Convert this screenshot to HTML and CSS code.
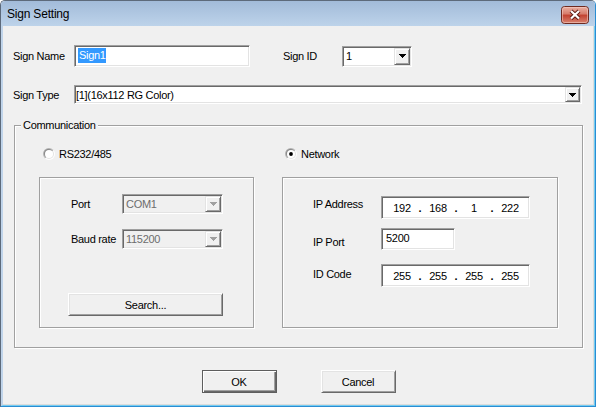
FILE: index.html
```html
<!DOCTYPE html>
<html>
<head>
<meta charset="utf-8">
<title>Sign Setting</title>
<link rel="stylesheet" href="styles.css">
</head>
<body>
<div class="window">
  <div class="titlebar">
    <span class="title">Sign Setting</span>
    <div class="close">
      <svg width="28" height="18" viewBox="0 0 28 18">
        <defs>
          <linearGradient id="cg" x1="0" y1="0" x2="0" y2="1">
            <stop offset="0" stop-color="#ebb3a5"/>
            <stop offset="0.45" stop-color="#d67a69"/>
            <stop offset="0.5" stop-color="#c2412f"/>
            <stop offset="1" stop-color="#d98673"/>
          </linearGradient>
        </defs>
        <rect x="0.5" y="0.5" width="27" height="17" rx="3" fill="url(#cg)" stroke="#6e2a20"/>
        <rect x="1.5" y="1.5" width="25" height="15" rx="2" fill="none" stroke="#f6d2c8" stroke-opacity="0.55"/>
        <path d="M10 5 L18 12.5 M18 5 L10 12.5" stroke="#5a1c14" stroke-width="4"/>
        <path d="M10 5 L18 12.5 M18 5 L10 12.5" stroke="#ffffff" stroke-width="2.2"/>
      </svg>
    </div>
  </div>
  <div class="client">
    <div class="main">
      <div class="row row-name">
        <span class="lbl">Sign Name</span>
        <div class="edit name-edit"><span class="sel">Sign1</span></div>
        <span class="lbl lbl-id">Sign ID</span>
        <div class="combo id-combo">
          <span class="ctext">1</span>
          <span class="cbtn"><svg width="7" height="4" viewBox="0 0 7 4"><path d="M0 0h7v1h-1v1h-1v1h-1v1h-1v-1h-1v-1h-1v-1h-1z" fill="#000"/></svg></span>
        </div>
      </div>
      <div class="row row-type">
        <span class="lbl">Sign Type</span>
        <div class="combo type-combo">
          <span class="ctext">[1](16x112 RG Color)</span>
          <span class="cbtn"><svg width="7" height="4" viewBox="0 0 7 4"><path d="M0 0h7v1h-1v1h-1v1h-1v1h-1v-1h-1v-1h-1v-1h-1z" fill="#000"/></svg></span>
        </div>
      </div>
      <div class="group etched">
        <span class="legend">Communication</span>
        <div class="col col-left">
          <div class="radio-row">
            <svg width="12" height="12" viewBox="0 0 12 12">
              <defs>
                <linearGradient id="ro1" x1="0" y1="0" x2="1" y2="1"><stop offset="0" stop-color="#9a9a9a"/><stop offset="0.5" stop-color="#c8c8c8"/><stop offset="0.55" stop-color="#ffffff"/><stop offset="1" stop-color="#ffffff"/></linearGradient>
                <linearGradient id="ri1" x1="0" y1="0" x2="1" y2="1"><stop offset="0" stop-color="#6a6a6a"/><stop offset="0.5" stop-color="#a8a8a8"/><stop offset="0.55" stop-color="#e3e3e3"/><stop offset="1" stop-color="#e3e3e3"/></linearGradient>
              </defs>
              <circle cx="6" cy="6" r="6" fill="url(#ro1)"/>
              <circle cx="6" cy="6" r="5" fill="url(#ri1)"/>
              <circle cx="6" cy="6" r="4" fill="#fff"/>
            </svg>
            <span>RS232/485</span>
          </div>
          <div class="box etched serial-box">
            <div class="frow">
              <span class="lbl2">Port</span>
              <div class="combo dis small-combo">
                <span class="ctext">COM1</span>
                <span class="cbtn"><svg width="7" height="4" viewBox="0 0 7 4"><path d="M0 0h7v1h-1v1h-1v1h-1v1h-1v-1h-1v-1h-1v-1h-1z" fill="#a0a0a0"/></svg></span>
              </div>
            </div>
            <div class="frow baud-row">
              <span class="lbl2">Baud rate</span>
              <div class="combo dis small-combo">
                <span class="ctext">115200</span>
                <span class="cbtn"><svg width="7" height="4" viewBox="0 0 7 4"><path d="M0 0h7v1h-1v1h-1v1h-1v1h-1v-1h-1v-1h-1v-1h-1z" fill="#a0a0a0"/></svg></span>
              </div>
            </div>
            <div class="btn search-btn">Search...</div>
          </div>
        </div>
        <div class="col col-right">
          <div class="radio-row">
            <svg width="12" height="12" viewBox="0 0 12 12">
              <defs>
                <linearGradient id="ro2" x1="0" y1="0" x2="1" y2="1"><stop offset="0" stop-color="#9a9a9a"/><stop offset="0.5" stop-color="#c8c8c8"/><stop offset="0.55" stop-color="#ffffff"/><stop offset="1" stop-color="#ffffff"/></linearGradient>
                <linearGradient id="ri2" x1="0" y1="0" x2="1" y2="1"><stop offset="0" stop-color="#6a6a6a"/><stop offset="0.5" stop-color="#a8a8a8"/><stop offset="0.55" stop-color="#e3e3e3"/><stop offset="1" stop-color="#e3e3e3"/></linearGradient>
              </defs>
              <circle cx="6" cy="6" r="6" fill="url(#ro2)"/>
              <circle cx="6" cy="6" r="5" fill="url(#ri2)"/>
              <circle cx="6" cy="6" r="4" fill="#fff"/>
              <circle cx="6" cy="6" r="1.9" fill="#000"/>
            </svg>
            <span>Network</span>
          </div>
          <div class="box etched net-box">
            <div class="nrow">
              <span class="lbl3 l-ip">IP Address</span>
              <div class="edit ipbox">
                <span class="oct">192</span><span class="dot">.</span><span class="oct">168</span><span class="dot">.</span><span class="oct">1</span><span class="dot">.</span><span class="oct">222</span>
              </div>
            </div>
            <div class="nrow port-row">
              <span class="lbl3 l-port">IP Port</span>
              <div class="edit portbox">5200</div>
            </div>
            <div class="nrow id-row">
              <span class="lbl3 l-code">ID Code</span>
              <div class="edit ipbox">
                <span class="oct">255</span><span class="dot">.</span><span class="oct">255</span><span class="dot">.</span><span class="oct">255</span><span class="dot">.</span><span class="oct">255</span>
              </div>
            </div>
          </div>
        </div>
      </div>
    </div>
    <div class="buttons">
      <div class="btn default-btn">OK</div>
      <div class="btn">Cancel</div>
    </div>
  </div>
</div>
</body>
</html>
```
FILE: styles.css
```css
* { box-sizing: border-box; }
html, body { margin: 0; padding: 0; }
body {
  width: 596px;
  height: 407px;
  overflow: hidden;
  background: #ffffff;
  font-family: "Liberation Sans", Arial, sans-serif;
  font-size: 11px;
  line-height: 14px;
  letter-spacing: -0.3px;
  color: #000;
}
.window {
  width: 596px;
  height: 407px;
  display: flex;
  flex-direction: column;
  border: 1px solid;
  border-color: #5d6a7b #2a8dd2 #2a8dd2 #5d6a7b;
  border-radius: 5px 5px 0 0;
  overflow: hidden;
}
.titlebar {
  height: 25px;
  flex: none;
  display: flex;
  align-items: center;
  justify-content: space-between;
  padding: 0 6px 0 6px;
  background: linear-gradient(#a2bbd9, #bdd3ea);
}
.title {
  font-size: 12px;
  letter-spacing: -0.2px;
  padding-top: 1px;
}
.close { width: 28px; height: 18px; display: flex; margin-top: 2px; }
.client {
  flex: 1;
  background: #f0f0f0;
  border-left: 2px solid #c0d4ea;
  border-right: 1px solid #74ccf1;
  border-bottom: 1px solid #74ccf1;
  box-shadow: inset -1px -1px 0 #dcdcdc;
  padding-top: 19px;
}
.main { padding-left: 10px; }
.row { display: flex; align-items: center; }
.lbl { width: 61px; flex: none; white-space: nowrap; }
.lbl-id { margin-left: 33px; width: 59px; }

.edit {
  background: #fff;
  border: 1px solid;
  border-color: #a0a0a0 #fff #fff #a0a0a0;
  box-shadow: inset 1px 1px 0 #696969, inset -1px -1px 0 #e3e3e3;
}
.name-edit {
  width: 176px;
  height: 22px;
  display: flex;
  align-items: flex-start;
  padding: 1px 0 0 3px;
}
.name-edit .sel {
  margin-top: 1px;
  background: #3399ff;
  color: #fff;
  line-height: 15px;
  padding: 0 0 0 1px;
}

.combo {
  display: flex;
  align-items: stretch;
  background: #fff;
  border: 1px solid;
  border-color: #a0a0a0 #fff #fff #a0a0a0;
  box-shadow: inset 1px 1px 0 #696969, inset -1px -1px 0 #e3e3e3;
  padding: 1px;
}
.ctext { flex: 1; display: flex; align-items: center; padding-left: 2px; white-space: nowrap; }
.cbtn {
  width: 16px;
  flex: none;
  display: flex;
  align-items: center;
  justify-content: center;
  background: #f0f0f0;
  border: 1px solid;
  border-color: #e3e3e3 #696969 #696969 #e3e3e3;
  box-shadow: inset 1px 1px 0 #fff, inset -1px -1px 0 #a0a0a0;
}
.id-combo { width: 70px; height: 21px; }
.id-combo .ctext { padding-left: 2px; }
.row-type { margin-top: 18px; }
.type-combo { width: 508px; height: 19px; }
.type-combo .ctext { padding-left: 0; }
.type-combo .cbtn { width: 15px; }

.etched {
  border: 1px solid #a0a0a0;
  box-shadow: inset 1px 1px 0 #fff, 1px 1px 0 #fff;
}
.group {
  position: relative;
  margin: 21px 0 0 1px;
  width: 569px;
  height: 223px;
  padding: 21px 0 0 24px;
  display: flex;
  gap: 28px;
}
.legend {
  position: absolute;
  top: -8px;
  left: 6px;
  padding: 0 2px;
  background: #f0f0f0;
  line-height: 14px;
}
.col { display: flex; flex-direction: column; }
.col-left { width: 215px; }
.col-right { width: 276px; }
.radio-row {
  display: flex;
  align-items: center;
  height: 14px;
  padding-left: 4px;
  gap: 4px;
}
.col-right .radio-row { padding-left: 3px; }
.box { margin-top: 16px; height: 151px; }

.serial-box { padding: 16px 0 0 28px; display: flex; flex-direction: column; }
.frow { display: flex; align-items: center; }
.baud-row { margin-top: 15px; }
.lbl2 { width: 54px; padding-left: 3px; white-space: nowrap; flex: none; }
.small-combo { width: 101px; height: 20px; }
.combo.dis { background: #f0f0f0; color: #6d6d6d; }
.small-combo .ctext { padding-left: 2px; }

.btn {
  display: flex;
  align-items: center;
  justify-content: center;
  width: 75px;
  height: 23px;
  background: #f0f0f0;
  border: 1px solid;
  border-color: #fff #696969 #696969 #fff;
  box-shadow: inset 1px 1px 0 #e3e3e3, inset -1px -1px 0 #a0a0a0;
}
.search-btn { width: 155px; margin-top: 44px; }
.default-btn {
  border: 1px solid #5e5e5e;
  box-shadow: inset 1px 1px 0 #fff, inset -1px -1px 0 #696969, inset -2px -2px 0 #a0a0a0;
}

.net-box { padding: 18px 0 0 30px; display: flex; flex-direction: column; }
.nrow { display: flex; align-items: flex-start; }
.lbl3 { width: 68px; flex: none; white-space: nowrap; }
.l-ip { margin-top: 1px; }
.l-port { margin-top: 7px; }
.l-code { margin-top: 3px; }
.port-row { margin-top: 9px; }
.id-row { margin-top: 14px; }
.ipbox {
  width: 149px;
  height: 23px;
  display: flex;
  align-items: center;
  padding: 1px 0 0 6px;
}
.oct { width: 28px; text-align: center; }
.dot { width: 8px; text-align: center; font-weight: bold; }
.portbox { width: 74px; height: 22px; padding: 2px 0 0 4px; }

.buttons {
  display: flex;
  justify-content: center;
  gap: 44px;
  margin-top: 22px;
}
```
